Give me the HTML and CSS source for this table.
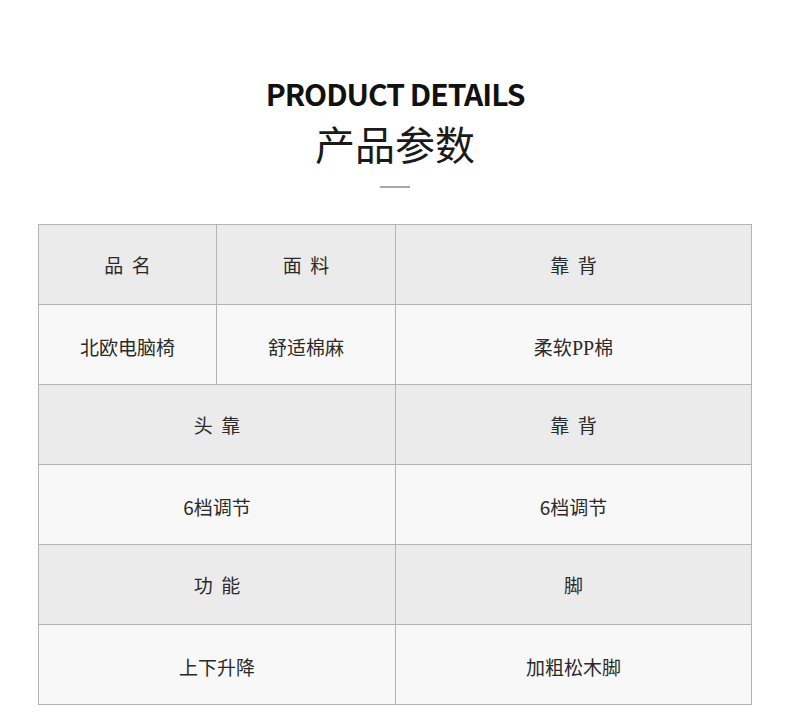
FILE: index.html
```html
<!DOCTYPE html>
<html lang="zh-CN">
<head>
<meta charset="utf-8">
<title>产品参数</title>
<link rel="stylesheet" href="styles.css">
</head>
<body>
<div class="page">
  <header class="head">
    <h1 class="title-en">PRODUCT DETAILS</h1>
    <h2 class="title-cn">产品参数</h2>
    <div class="divider"></div>
  </header>
  <table class="spec">
    <colgroup>
      <col class="c1"><col class="c2"><col class="c3">
    </colgroup>
    <tr class="hd">
      <td>品&nbsp;&nbsp;名</td>
      <td>面&nbsp;&nbsp;料</td>
      <td>靠&nbsp;&nbsp;背</td>
    </tr>
    <tr class="dt">
      <td>北欧电脑椅</td>
      <td>舒适棉麻</td>
      <td>柔软<span class="latin">PP</span>棉</td>
    </tr>
    <tr class="hd">
      <td colspan="2">头&nbsp;&nbsp;靠</td>
      <td>靠&nbsp;&nbsp;背</td>
    </tr>
    <tr class="dt">
      <td colspan="2">6档调节</td>
      <td>6档调节</td>
    </tr>
    <tr class="hd">
      <td colspan="2">功&nbsp;&nbsp;能</td>
      <td>脚</td>
    </tr>
    <tr class="dt">
      <td colspan="2">上下升降</td>
      <td>加粗松木脚</td>
    </tr>
  </table>
</div>
</body>
</html>
```
FILE: styles.css
```css
html, body {
  margin: 0;
  padding: 0;
  background: #ffffff;
}
.page {
  width: 790px;
  font-family: "Noto Sans CJK SC", "Noto Sans", sans-serif;
  color: #222;
}
.head {
  display: flex;
  flex-direction: column;
  align-items: center;
  padding-top: 73px;
}
.title-en {
  margin: 0;
  font-size: 30px;
  line-height: 40px;
  font-weight: 700;
  letter-spacing: -1px;
  color: #111;
}
.title-cn {
  margin: 6px 0 0;
  font-size: 40px;
  line-height: 48px;
  font-weight: 400;
  color: #1a1a1a;
  letter-spacing: 0;
}
.divider {
  width: 30px;
  height: 2px;
  background: #a9a9a9;
  margin-top: 19px;
}
.spec {
  margin: 36px 0 0 38px;
  width: 713px;
  border-collapse: collapse;
  table-layout: fixed;
  font-family: "Noto Sans CJK SC", sans-serif;
  font-size: 19px;
  color: #2a2a2a;
}
.c1 { width: 178px; }
.c2 { width: 179px; }
.c3 { width: 356px; }
.spec td {
  border: 1px solid #b4b4b4;
  height: 79px;
  padding: 0;
  text-align: center;
  vertical-align: middle;
}
.hd td { background: #ebebeb; }
.spec .dt td {
  background: #f8f8f8;
  height: 76px;
  padding-top: 3px;
}
.latin {
  font-family: "Liberation Serif", serif;
  font-size: 20px;
}
```
